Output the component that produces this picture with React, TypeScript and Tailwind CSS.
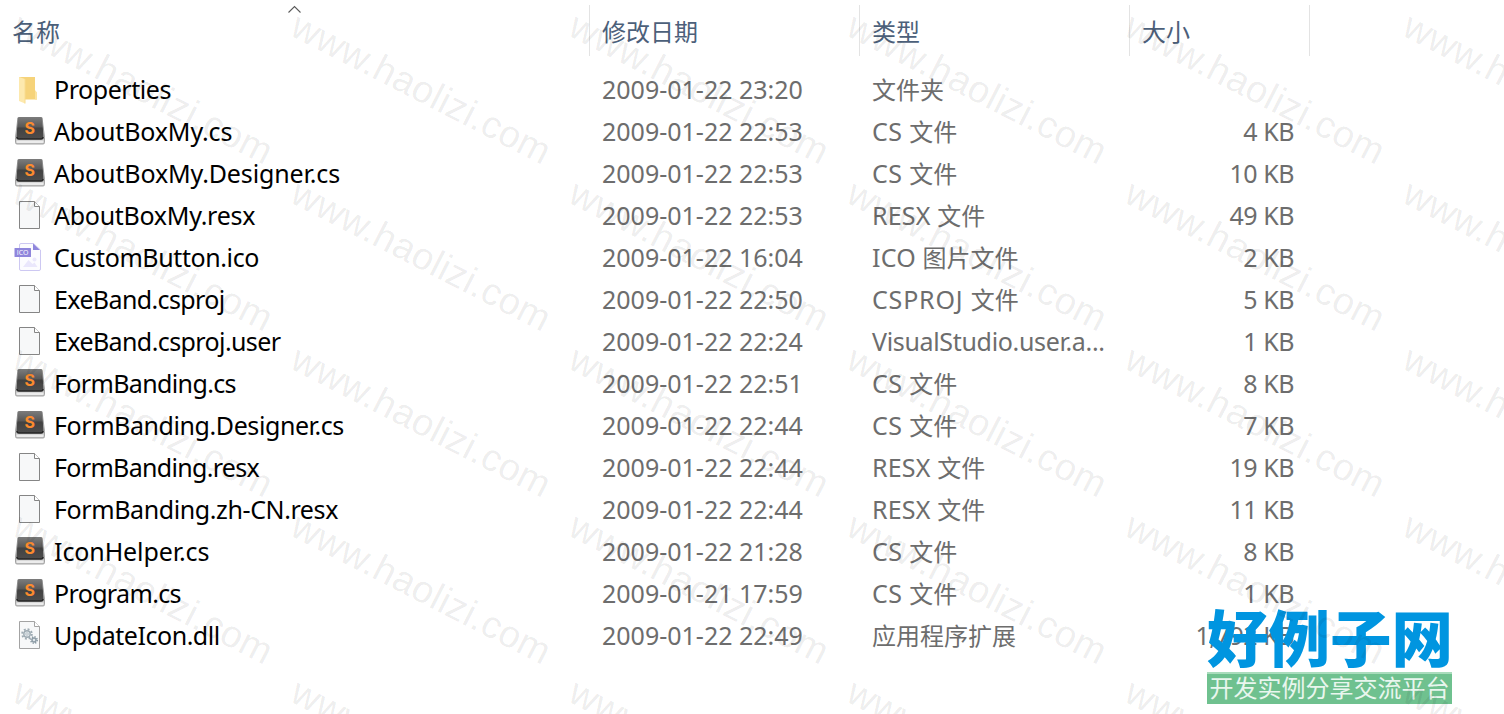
import { Fragment } from 'react';

type FileKind = 'folder' | 'sublime' | 'blank' | 'ico' | 'dll';

interface FileEntry {
  name: string;
  nameClass: string;
  kind: FileKind;
  date: string;
  type: string;
  typeClass?: string;
  size: string;
}

const files: FileEntry[] = [
  { name: 'Properties', nameClass: 'tracking-[-0.45px]', kind: 'folder', date: '2009-01-22 23:20', type: '文件夹', size: '' },
  { name: 'AboutBoxMy.cs', nameClass: 'tracking-[-0.15px]', kind: 'sublime', date: '2009-01-22 22:53', type: 'CS 文件', typeClass: 'tracking-[0.4px]', size: '4 KB' },
  { name: 'AboutBoxMy.Designer.cs', nameClass: 'tracking-[-0.13px]', kind: 'sublime', date: '2009-01-22 22:53', type: 'CS 文件', typeClass: 'tracking-[0.4px]', size: '10 KB' },
  { name: 'AboutBoxMy.resx', nameClass: 'tracking-[-0.28px]', kind: 'blank', date: '2009-01-22 22:53', type: 'RESX 文件', typeClass: 'tracking-[0.2px]', size: '49 KB' },
  { name: 'CustomButton.ico', nameClass: 'tracking-[-0.4px]', kind: 'ico', date: '2009-01-22 16:04', type: 'ICO 图片文件', typeClass: 'tracking-[0.2px]', size: '2 KB' },
  { name: 'ExeBand.csproj', nameClass: 'tracking-[-0.62px]', kind: 'blank', date: '2009-01-22 22:50', type: 'CSPROJ 文件', typeClass: 'tracking-[0.8px]', size: '5 KB' },
  { name: 'ExeBand.csproj.user', nameClass: 'tracking-[-0.6px]', kind: 'blank', date: '2009-01-22 22:24', type: 'VisualStudio.user.a...', typeClass: 'tracking-[-0.33px]', size: '1 KB' },
  { name: 'FormBanding.cs', nameClass: 'tracking-[-0.64px]', kind: 'sublime', date: '2009-01-22 22:51', type: 'CS 文件', typeClass: 'tracking-[0.4px]', size: '8 KB' },
  { name: 'FormBanding.Designer.cs', nameClass: 'tracking-[-0.42px]', kind: 'sublime', date: '2009-01-22 22:44', type: 'CS 文件', typeClass: 'tracking-[0.4px]', size: '7 KB' },
  { name: 'FormBanding.resx', nameClass: 'tracking-[-0.68px]', kind: 'blank', date: '2009-01-22 22:44', type: 'RESX 文件', typeClass: 'tracking-[0.2px]', size: '19 KB' },
  { name: 'FormBanding.zh-CN.resx', nameClass: 'tracking-[-0.4px]', kind: 'blank', date: '2009-01-22 22:44', type: 'RESX 文件', typeClass: 'tracking-[0.2px]', size: '11 KB' },
  { name: 'IconHelper.cs', nameClass: 'tracking-[-0.1px]', kind: 'sublime', date: '2009-01-22 21:28', type: 'CS 文件', typeClass: 'tracking-[0.4px]', size: '8 KB' },
  { name: 'Program.cs', nameClass: 'tracking-[-0.65px]', kind: 'sublime', date: '2009-01-21 17:59', type: 'CS 文件', typeClass: 'tracking-[0.4px]', size: '1 KB' },
  { name: 'UpdateIcon.dll', nameClass: 'tracking-[-0.46px]', kind: 'dll', date: '2009-01-22 22:49', type: '应用程序扩展', size: '1,792 KB' },
];

const watermarkRows = [0, 1, 2, 3, 4];
const watermarkCols = [0, 1, 2, 3, 4, 5];

function FolderIcon() {
  return (
    <svg viewBox="0 0 32 32" className="w-8 h-8">
      <path d="M5 4h16v14l2 2v6.500H5z" fill="#f6d37a" />
      <path d="M21 17l2 2.500v7h-2z" fill="#fbe3a0" />
      <path d="M5 4l6 2v24.500L5 28z" fill="#fde9ae" />
      <path d="M11 6v24.500" stroke="#f8dc90" strokeWidth="1" />
    </svg>
  );
}

function SublimeIcon() {
  return (
    <svg viewBox="0 0 32 32" className="w-8 h-8">
      <defs>
        <linearGradient id="key" x1="0" y1="0" x2="0" y2="1">
          <stop offset="0" stopColor="#7c7c7c" />
          <stop offset="0.450" stopColor="#585858" />
          <stop offset="0.500" stopColor="#424242" />
          <stop offset="1" stopColor="#4c4c4c" />
        </linearGradient>
      </defs>
      <path d="M4 2.500h24l2.500 20v5q0 1.500-1.500 1.500H3q-1.500 0-1.500-1.500v-5z" fill="#c4c4c4" stroke="#a3a3a3" />
      <path d="M2.500 25.500h27v1.500q0 1-1 1h-25q-1 0-1-1z" fill="#ececec" />
      <path d="M5.500 2h21q1.500 0 1.700 1.500L29.500 22q0 2-2 2h-23q-2 0-2-2L3.800 3.500Q4 2 5.500 2z" fill="url(#key)" />
      <path d="M3 22q0 2 2 2h22q2 0 2-2" fill="none" stroke="#262626" strokeWidth="1.500" />
      <text x="15.700" y="18.500" textAnchor="middle" fontSize="16" fontWeight="700" fill="#fb8b2e" fontFamily="Inter, sans-serif">
        S
      </text>
    </svg>
  );
}

function PageShape({ stroke }: { stroke: string }) {
  return (
    <>
      <path d="M5.500 2.500h15l5 5v22h-20z" fill="#f7f8f9" stroke={stroke} />
      <path d="M20.500 2.500v5h5" fill="#fff" stroke={stroke} />
    </>
  );
}

function BlankIcon() {
  return (
    <svg viewBox="0 0 32 32" className="w-8 h-8">
      <PageShape stroke="#858585" />
    </svg>
  );
}

function IcoIcon() {
  return (
    <svg viewBox="0 0 32 32" className="w-8 h-8">
      <path d="M7 2.500h12.500l7 6.500v19q0 1.500-1.500 1.500H7q-1.500 0-1.500-1.500V4q0-1.500 1.500-1.500z" fill="#fcfcff" stroke="#cdc8f2" />
      <path d="M19 2.500l7 6.500h-7z" fill="#8f86dc" />
      <path d="M9 26l5.500-7 4 4 2-1.500 3 4.500z" fill="#eae7fc" />
      <circle cx="20.500" cy="18.500" r="2" fill="#eae7fc" />
      <rect x="0.500" y="7" width="16.500" height="9" rx="0.500" fill="#8f86dc" />
      <text x="8.600" y="14" textAnchor="middle" fontSize="7" fill="#fff" fontFamily="Open Sans, sans-serif">
        ICO
      </text>
    </svg>
  );
}

function DllIcon() {
  return (
    <svg viewBox="0 0 32 32" className="w-8 h-8">
      <PageShape stroke="#a3a3a3" />
      <circle cx="13" cy="15" r="4.800" fill="none" stroke="#9eabb3" strokeWidth="2" strokeDasharray="1.900 1.870" />
      <circle cx="13" cy="15" r="3.200" fill="#dfe6ea" stroke="#9eabb3" strokeWidth="1.400" />
      <circle cx="13" cy="15" r="1.200" fill="#fff" stroke="#9aa8b1" strokeWidth="0.700" />
      <circle cx="20" cy="21" r="3.200" fill="none" stroke="#8c9ba5" strokeWidth="1.600" strokeDasharray="1.300 1.213" />
      <circle cx="20" cy="21" r="2" fill="#dfe6ea" stroke="#8c9ba5" strokeWidth="1.400" />
    </svg>
  );
}

function FileIcon({ kind }: { kind: FileKind }) {
  if (kind === 'folder') return <FolderIcon />;
  if (kind === 'sublime') return <SublimeIcon />;
  if (kind === 'ico') return <IcoIcon />;
  if (kind === 'dll') return <DllIcon />;
  return <BlankIcon />;
}

// Latin runs are set one pixel larger than the Chinese ones
function MixedText({ text }: { text: string }) {
  const parts = text.split(/([\u4e00-\u9fff]+)/).filter(Boolean);
  return (
    <>
      {parts.map((part, i) =>
        /[\u4e00-\u9fff]/.test(part) ? (
          <span key={i} className="text-[24px] tracking-normal">{part}</span>
        ) : (
          <Fragment key={i}>{part}</Fragment>
        )
      )}
    </>
  );
}

function Header() {
  return (
    <div className="flex h-[51px] mt-[5px] text-[24px] leading-[53px] text-[#4c607a]">
      <div className="relative w-[590px] shrink-0 border-r border-[#e3e3e3] pl-3">
        名称
        <svg viewBox="0 0 14 8" className="absolute left-[287px] top-0 w-[14px] h-2">
          <path d="M1.500 7.500l6-6 6 6" fill="none" stroke="#5a5a5a" strokeWidth="1.100" />
        </svg>
      </div>
      <div className="w-[270px] shrink-0 border-r border-[#e3e3e3] pl-3">修改日期</div>
      <div className="w-[270px] shrink-0 border-r border-[#e3e3e3] pl-3">类型</div>
      <div className="w-[180px] shrink-0 border-r border-[#e3e3e3] pl-3">大小</div>
    </div>
  );
}

function FileRow({ file }: { file: FileEntry }) {
  return (
    <div className="flex h-[42px] leading-[38px] text-[25px] text-[#6d6d6d] whitespace-pre">
      <div className="flex w-[590px] shrink-0 pl-[14px] text-black">
        <div className="w-10 pt-[3px]">
          <FileIcon kind={file.kind} />
        </div>
        <span className={file.nameClass}>{file.name}</span>
      </div>
      <div className="w-[270px] shrink-0 pl-3">{file.date}</div>
      <div className={`w-[270px] shrink-0 pl-3 ${file.typeClass ?? ''}`}>
        <MixedText text={file.type} />
      </div>
      <div className="w-[164px] shrink-0 text-right tracking-[-0.45px]">{file.size}</div>
    </div>
  );
}

function SiteLogo() {
  return (
    <div className="absolute left-[1207px] top-[606px] w-[245px]">
      <div className="h-[66px] text-[61.5px] leading-[65px] font-black text-[#0095e0] whitespace-nowrap">好例子网</div>
      <div className="h-8 border-t-2 border-[#a9dcbc] bg-[#6fc18f] text-center text-[24px] leading-[27px] text-[#e9f6ee] whitespace-nowrap">
        开发实例分享交流平台
      </div>
    </div>
  );
}

function Watermarks() {
  return (
    <div className="absolute inset-0 pointer-events-none">
      {watermarkRows.map((row) =>
        watermarkCols.map((col) => (
          <span
            key={`${row}-${col}`}
            className="absolute origin-bottom-left rotate-[27.200deg] font-['Liberation_Sans',sans-serif] text-[38px] leading-[36px] tracking-[0.350px] text-black/8"
            style={{ left: 8 + col * 278, top: Math.round(3 + row * 166.5) }}
          >
            www.haolizi.com
          </span>
        ))
      )}
    </div>
  );
}

export default function App() {
  return (
    <div className="relative w-[1504px] h-[714px] overflow-hidden bg-white font-['Noto_Sans','Noto_Sans_CJK_SC',sans-serif]">
      <Header />
      <div className="pt-[14px]">
        {files.map((file) => (
          <FileRow key={file.name} file={file} />
        ))}
      </div>
      <SiteLogo />
      <Watermarks />
    </div>
  );
}
